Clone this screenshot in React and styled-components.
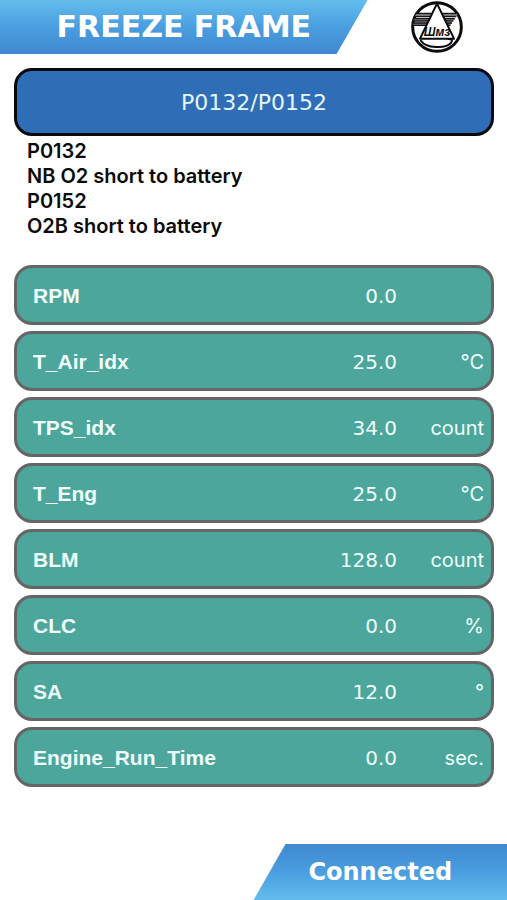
import styled, { createGlobalStyle } from 'styled-components';

const readings = [
  { name: 'RPM', value: '0.0', unit: '' },
  { name: 'T_Air_idx', value: '25.0', unit: '°C' },
  { name: 'TPS_idx', value: '34.0', unit: 'count' },
  { name: 'T_Eng', value: '25.0', unit: '°C' },
  { name: 'BLM', value: '128.0', unit: 'count' },
  { name: 'CLC', value: '0.0', unit: '%' },
  { name: 'SA', value: '12.0', unit: '°' },
  { name: 'Engine_Run_Time', value: '0.0', unit: 'sec.' },
];

const codes = [
  { code: 'P0132', text: 'NB O2 short to battery' },
  { code: 'P0152', text: 'O2B short to battery' },
];

const Logo = () => (
  <LogoSvg viewBox="0 0 156 156" aria-hidden="true">
    <circle cx="78" cy="78" r="73" fill="#fff" stroke="#0b0b0b" strokeWidth="9" />
    <path d="M16 37H62L58 46H12ZM9 52H55L52 59H8ZM7 65H49L45 73H7Z" fill="#777" />
    <path d="M94 37H142L136 46H98ZM101 52H132L127 59H104ZM107 65H123L118 73H111Z" fill="#777" />
    <g stroke="#141414" strokeWidth="4">
      <path d="M14 37H62M10 47H58M8 53H55M7 60H52M6 66H49M6 73H45" />
      <path d="M94 37H142M98 47H136M101 53H132M104 60H127M107 66H123M111 73H118" />
    </g>
    <path
      d="M78 8L27 113H129Z"
      fill="#fff"
      stroke="#0b0b0b"
      strokeWidth="6"
      strokeLinejoin="round"
    />
    <path
      d="M30 119C44 142 106 145 121 124C126 118 121 113 112 114"
      fill="none"
      stroke="#0b0b0b"
      strokeWidth="6"
      strokeLinecap="round"
    />
    <LogoText x="78" y="105" textAnchor="middle">
      Шмз
    </LogoText>
  </LogoSvg>
);

const App = () => {
  return (
    <Page>
      <GlobalStyle />
      <Header>
        <Title>FREEZE FRAME</Title>
        <LogoWrapper>
          <Logo />
        </LogoWrapper>
      </Header>
      <Main>
        <CodeButton type="button">P0132/P0152</CodeButton>
        <Description>
          {codes.map(({ code, text }) => (
            <div key={code}>
              <dt>{code}</dt>
              <dd>{text}</dd>
            </div>
          ))}
        </Description>
        <Table>
          <tbody>
            {readings.map(({ name, value, unit }) => (
              <Row key={name}>
                <Name scope="row">{name}</Name>
                <Value>{value}</Value>
                <Unit>{unit}</Unit>
              </Row>
            ))}
          </tbody>
        </Table>
      </Main>
      <Footer>
        <Status>Connected</Status>
      </Footer>
    </Page>
  );
};

const GlobalStyle = createGlobalStyle`
  * {
    box-sizing: border-box;
  }
  body {
    margin: 0;
    background: #fff;
  }
`;

const Page = styled.div`
  display: flex;
  flex-direction: column;
  min-height: 100vh;
  font-family: Inter, sans-serif;
`;

const Header = styled.header`
  display: grid;
  grid-template-columns: 29fr 11fr;
  height: 54px;
`;

const Title = styled.h1`
  margin: 0;
  line-height: 54px;
  text-align: center;
  font-family: 'DejaVu Sans', sans-serif;
  font-size: 30px;
  font-weight: 700;
  white-space: nowrap;
  color: #fff;
  background: linear-gradient(#63bdec, #4a9ee0 50%, #3f88d0);
  clip-path: polygon(0 0, 100% 0, calc(100% - 31px) 100%, 0 100%);
`;

const LogoWrapper = styled.div`
  display: flex;
  align-items: center;
  justify-content: center;
`;

const LogoSvg = styled.svg`
  width: 52px;
  height: 52px;
`;

const LogoText = styled.text`
  font-family: 'Liberation Sans', sans-serif;
  font-size: 36px;
  font-style: italic;
  font-weight: 700;
  fill: #0b0b0b;
`;

const Main = styled.main`
  padding: 14px 13px 0 14px;
`;

const CodeButton = styled.button`
  display: block;
  width: 100%;
  height: 68px;
  border: 3px solid #050a10;
  border-radius: 18px;
  background: #2f6eb6;
  color: #e6f6ff;
  font-family: 'DejaVu Sans', sans-serif;
  font-size: 22px;
`;

const Description = styled.dl`
  margin: 0;
  padding: 3px 13px 26px;
  font-size: 20px;
  font-weight: 600;
  line-height: 25px;
  color: #0a0a0a;
  dd {
    margin: 0;
  }
`;

const Table = styled.table`
  display: block;
  tbody {
    display: grid;
    gap: 6px;
  }
`;

const Row = styled.tr`
  display: grid;
  grid-template-columns: 1fr 80px 87px;
  align-items: center;
  height: 60px;
  padding: 2px 7px 0 16px;
  border: 3px solid #656565;
  border-radius: 18px;
  background: #4ca69b;
  color: #f0fffc;
`;

const Name = styled.th`
  padding: 0;
  text-align: left;
  font-family: 'Liberation Sans', sans-serif;
  font-size: 21px;
  font-weight: 700;
`;

const Value = styled.td`
  padding: 0;
  text-align: right;
  font-family: 'DejaVu Sans', sans-serif;
  font-size: 20px;
`;

const Unit = styled.td`
  padding: 0;
  text-align: right;
  font-size: 20px;
`;

const Footer = styled.footer`
  display: flex;
  justify-content: flex-end;
  margin-top: auto;
`;

const Status = styled.div`
  width: 50%;
  height: 56px;
  line-height: 56px;
  text-align: center;
  font-family: 'DejaVu Sans', sans-serif;
  font-size: 24px;
  font-weight: 700;
  color: #fff;
  background: linear-gradient(#3f88d0, #4a9ee0 50%, #63bdec);
  clip-path: polygon(32px 0, 100% 0, 100% 100%, 0 100%);
`;

export default App;
